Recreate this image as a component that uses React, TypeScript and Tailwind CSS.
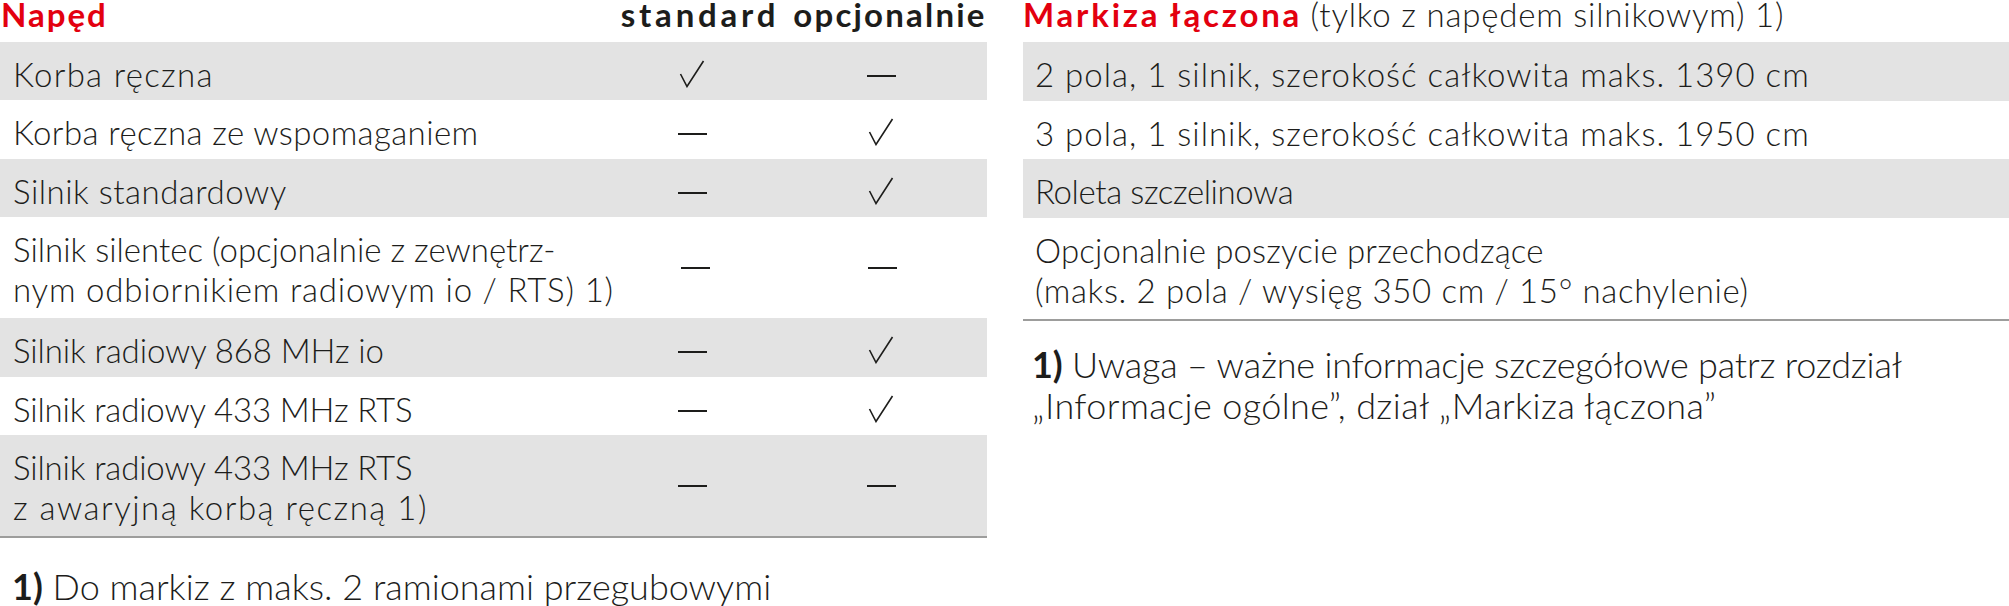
import React from "react";

type Mark = "check" | "dash";

const Check = () => (
  <svg width="26" height="28" viewBox="0 0 26 28" className="block">
    <path d="M1.5 14 L8 26.5 L24.5 1" fill="none" stroke="#1d1d1b" strokeWidth="1.6" strokeLinejoin="miter" strokeLinecap="butt" />
  </svg>
);

const Dash = () => <div className="w-[29px] h-[2px] bg-[#1d1d1b]" />;

const MarkCell = ({ mark, double, width }: { mark: Mark; double: boolean; width: string }) => (
  <div className={`${width} flex justify-center ${double ? "items-center" : "items-start"}`}>
    {double ? (
      mark === "check" ? <Check /> : <Dash />
    ) : mark === "check" ? (
      <div className="mt-[18px]">
        <Check />
      </div>
    ) : (
      <div className="mt-[33px]">
        <Dash />
      </div>
    )}
  </div>
);

type Line = { t: string; c: string };

const leftRows: { lines: Line[]; a: Mark; b: Mark }[] = [
  { lines: [{ t: "Korba ręczna", c: "tracking-[1.3px]" }], a: "check", b: "dash" },
  { lines: [{ t: "Korba ręczna ze wspomaganiem", c: "tracking-[0.4px]" }], a: "dash", b: "check" },
  { lines: [{ t: "Silnik standardowy", c: "tracking-[0.5px]" }], a: "dash", b: "check" },
  {
    lines: [
      { t: "Silnik silentec (opcjonalnie z zewnętrz-", c: "tracking-[0px]" },
      { t: "nym odbiornikiem radiowym io / RTS) 1)", c: "tracking-[0.8px]" },
    ],
    a: "dash",
    b: "dash",
  },
  { lines: [{ t: "Silnik radiowy 868 MHz io", c: "tracking-[-0.1px]" }], a: "dash", b: "check" },
  { lines: [{ t: "Silnik radiowy 433 MHz RTS", c: "tracking-[-0.15px]" }], a: "dash", b: "check" },
  {
    lines: [
      { t: "Silnik radiowy 433 MHz RTS", c: "tracking-[-0.15px]" },
      { t: "z awaryjną korbą ręczną 1)", c: "tracking-[1.5px]" },
    ],
    a: "dash",
    b: "dash",
  },
];

const rightRows: Line[][] = [
  [{ t: "2 pola, 1 silnik, szerokość całkowita maks. 1390 cm", c: "tracking-[1px]" }],
  [{ t: "3 pola, 1 silnik, szerokość całkowita maks. 1950 cm", c: "tracking-[1px]" }],
  [{ t: "Roleta szczelinowa", c: "tracking-[-0.4px]" }],
  [
    { t: "Opcjonalnie poszycie przechodzące", c: "tracking-[0.15px]" },
    { t: "(maks. 2 pola / wysięg 350 cm / 15° nachylenie)", c: "tracking-[0.65px]" },
  ],
];

export default function App() {
  return (
    <div
      className="w-[2009px] h-[606px] bg-white text-[#1d1d1b] flex gap-[36px] overflow-hidden"
      style={{ fontFamily: "Lato, 'Open Sans', sans-serif" }}
    >
      {/* Left: Napęd */}
      <div className="w-[987px] flex flex-col">
        <div className="h-[42px] flex items-start leading-[28px] text-[33px] font-bold whitespace-nowrap">
          <div className="flex-1 pl-[1px] text-[#e3000f] tracking-[2px]">Napęd</div>
          <div className="w-[150px] flex justify-center tracking-[3.8px]">standard</div>
          <div className="w-[18px]" />
          <div className="w-[194px] flex justify-center tracking-[2.2px]">opcjonalnie</div>
        </div>
        {leftRows.map((r, i) => {
          const double = r.lines.length > 1;
          return (
            <div
              key={i}
              className={`flex ${double ? "h-[101px]" : "h-[58.5px]"} ${i % 2 === 0 ? "bg-[#e3e3e3]" : "bg-white"}`}
            >
              <div className="flex-1 pl-[13px] pt-3 text-[33px] leading-[40px] font-light whitespace-nowrap">
                {r.lines.map((l, j) => (
                  <div key={j} className={l.c}>
                    {l.t}
                  </div>
                ))}
              </div>
              <MarkCell mark={r.a} double={double} width="w-[166px]" />
              <MarkCell mark={r.b} double={double} width="w-[212px]" />
            </div>
          );
        })}
        <div className="h-[2px] bg-[#9d9d9c]" />
        <div className="mt-[28px] pl-[12px] text-[36px] leading-[40px] font-light whitespace-nowrap">
          <span className="font-bold">1)</span> Do markiz z maks. 2 ramionami przegubowymi
        </div>
      </div>

      {/* Right: Markiza łączona */}
      <div className="flex-1 flex flex-col">
        <div className="h-[42px] leading-[28px] text-[33px] whitespace-nowrap">
          <span className="font-bold text-[#e3000f] tracking-[2.8px]">Markiza łączona</span>{" "}
          <span className="font-light tracking-[0.8px]">(tylko z napędem silnikowym) 1)</span>
        </div>
        {rightRows.map((r, i) => {
          const double = r.length > 1;
          return (
            <div
              key={i}
              className={`${double ? "h-[101px]" : "h-[58.5px]"} ${i % 2 === 0 ? "bg-[#e3e3e3]" : "bg-white"} pl-[12px] pt-3 text-[33px] leading-[40px] font-light whitespace-nowrap`}
            >
              {r.map((l, j) => (
                <div key={j} className={l.c}>
                  {l.t}
                </div>
              ))}
            </div>
          );
        })}
        <div className="h-[2px] bg-[#9d9d9c]" />
        <div className="mt-[23px] pl-[9px] text-[36px] leading-[41px] font-light whitespace-nowrap">
          <div className="tracking-[-0.2px]">
            <span className="font-bold">1)</span> Uwaga – ważne informacje szczegółowe patrz rozdział
          </div>
          <div className="tracking-[0.4px]">„Informacje ogólne”, dział „Markiza łączona”</div>
        </div>
      </div>
    </div>
  );
}
